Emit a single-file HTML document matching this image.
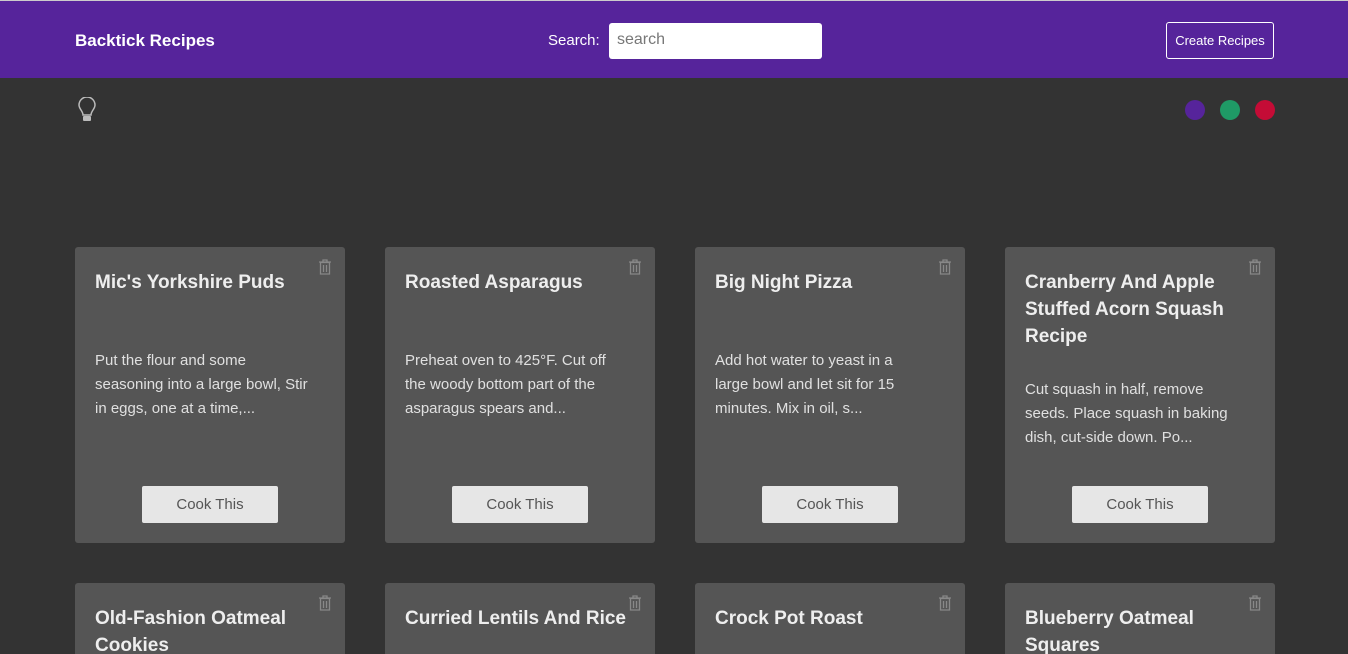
<!DOCTYPE html>
<html><head><style>
*{box-sizing:border-box;margin:0;padding:0}
html,body{width:1348px;height:654px;overflow:hidden}
body{background:#333;font-family:"Liberation Sans",sans-serif;position:relative}
.hdr{position:absolute;top:0;left:0;width:1348px;height:78px;background:#56249b;border-top:1px solid #ccc}
.logo{position:absolute;left:75px;top:30px;color:#fff;font-weight:bold;font-size:17px}
.srch{position:absolute;left:548px;top:31px;color:#fff;font-size:15px}
.inp{position:absolute;left:609px;top:22px;width:213px;height:36px;background:#fff;border-radius:3px;color:#777;font-size:16px;padding:8px 8px}
.btn{position:absolute;left:1166px;top:21px;width:108px;height:37px;border:1px solid #fff;border-radius:3px;color:#fff;font-size:13px;text-align:center;line-height:35px}
.dot{position:absolute;top:100px;width:20px;height:20px;border-radius:50%}
.card{position:absolute;width:270px;height:296px;background:#555;border-radius:3px;padding:20px}
.card h2{color:#eee;font-size:19px;line-height:27px;font-weight:bold;margin-top:2px}
.card p{color:#e0e0e0;font-size:15px;line-height:24px;margin-top:53px;white-space:nowrap}
.cook{position:absolute;left:67px;bottom:20px;width:136px;height:37px;background:#e6e6e6;border-radius:2px;color:#555;font-size:15px;text-align:center;line-height:37px}
.tr{position:absolute;right:13px;top:12px}
</style></head><body>
<div class="hdr">
<div class="logo">Backtick Recipes</div>
<div class="srch">Search:</div>
<div class="inp">search</div>
<div class="btn">Create Recipes</div>
</div>
<svg style="position:absolute;left:77px;top:97px" width="20" height="26" viewBox="0 0 20 26"><path d="M6 18 C6 14 2 12 2 8 A8 8 0 0 1 18 8 C18 12 14 14 14 18 Z" fill="none" stroke="#bbb" stroke-width="1.5"/><rect x="6" y="19" width="8" height="5" rx="1" fill="#bbb"/></svg>
<div class="dot" style="left:1185px;background:#56249b"></div>
<div class="dot" style="left:1220px;background:#1f9a66"></div>
<div class="dot" style="left:1255px;background:#c40c36"></div>

<div class="card" style="left:75px;top:247px"><svg class="tr" width="14" height="16" viewBox="0 0 14 16"><path d="M1 3h12M5 3V1h4v2M2.5 3.5h9v11.5h-9z M5.5 6v7M8.5 6v7" fill="none" stroke="#888" stroke-width="1.3"/></svg><h2>Mic's Yorkshire Puds</h2><p>Put the flour and some<br>seasoning into a large bowl, Stir<br>in eggs, one at a time,...</p><div class="cook">Cook This</div></div>
<div class="card" style="left:385px;top:247px"><svg class="tr" width="14" height="16" viewBox="0 0 14 16"><path d="M1 3h12M5 3V1h4v2M2.5 3.5h9v11.5h-9z M5.5 6v7M8.5 6v7" fill="none" stroke="#888" stroke-width="1.3"/></svg><h2>Roasted Asparagus</h2><p>Preheat oven to 425°F. Cut off<br>the woody bottom part of the<br>asparagus spears and...</p><div class="cook">Cook This</div></div>
<div class="card" style="left:695px;top:247px"><svg class="tr" width="14" height="16" viewBox="0 0 14 16"><path d="M1 3h12M5 3V1h4v2M2.5 3.5h9v11.5h-9z M5.5 6v7M8.5 6v7" fill="none" stroke="#888" stroke-width="1.3"/></svg><h2>Big Night Pizza</h2><p>Add hot water to yeast in a<br>large bowl and let sit for 15<br>minutes. Mix in oil, s...</p><div class="cook">Cook This</div></div>
<div class="card" style="left:1005px;top:247px"><svg class="tr" width="14" height="16" viewBox="0 0 14 16"><path d="M1 3h12M5 3V1h4v2M2.5 3.5h9v11.5h-9z M5.5 6v7M8.5 6v7" fill="none" stroke="#888" stroke-width="1.3"/></svg><h2>Cranberry And Apple<br>Stuffed Acorn Squash<br>Recipe</h2><p style="margin-top:28px">Cut squash in half, remove<br>seeds. Place squash in baking<br>dish, cut-side down. Po...</p><div class="cook">Cook This</div></div>

<div class="card" style="left:75px;top:583px"><svg class="tr" width="14" height="16" viewBox="0 0 14 16"><path d="M1 3h12M5 3V1h4v2M2.5 3.5h9v11.5h-9z M5.5 6v7M8.5 6v7" fill="none" stroke="#888" stroke-width="1.3"/></svg><h2>Old-Fashion Oatmeal Cookies</h2></div>
<div class="card" style="left:385px;top:583px"><svg class="tr" width="14" height="16" viewBox="0 0 14 16"><path d="M1 3h12M5 3V1h4v2M2.5 3.5h9v11.5h-9z M5.5 6v7M8.5 6v7" fill="none" stroke="#888" stroke-width="1.3"/></svg><h2>Curried Lentils And Rice</h2></div>
<div class="card" style="left:695px;top:583px"><svg class="tr" width="14" height="16" viewBox="0 0 14 16"><path d="M1 3h12M5 3V1h4v2M2.5 3.5h9v11.5h-9z M5.5 6v7M8.5 6v7" fill="none" stroke="#888" stroke-width="1.3"/></svg><h2>Crock Pot Roast</h2></div>
<div class="card" style="left:1005px;top:583px"><svg class="tr" width="14" height="16" viewBox="0 0 14 16"><path d="M1 3h12M5 3V1h4v2M2.5 3.5h9v11.5h-9z M5.5 6v7M8.5 6v7" fill="none" stroke="#888" stroke-width="1.3"/></svg><h2>Blueberry Oatmeal Squares</h2></div>
</body></html>
